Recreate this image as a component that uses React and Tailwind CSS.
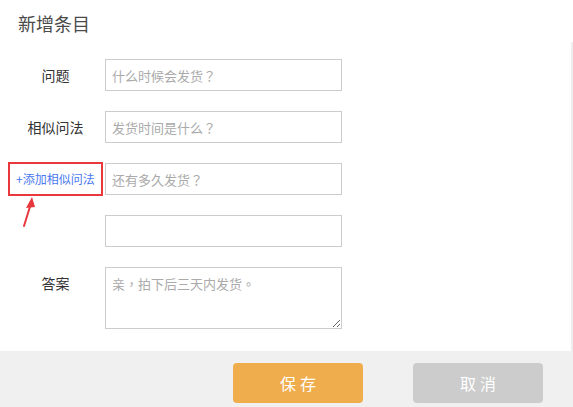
import React from 'react';

const font = { fontFamily: '"Microsoft YaHei", "Noto Sans CJK SC", "Noto Sans", sans-serif' };
const fieldFont = { fontFamily: '"Noto Sans CJK TC", "Noto Sans CJK SC", sans-serif' };

const inputCls =
  'w-[237px] h-[32px] border border-[#cccccc] bg-white px-[6px] text-[13px] text-[#333] placeholder:text-[#aaaaaa] outline-none';

const Row = ({ label, children }) => (
  <div className="flex items-center">
    <div className="w-[105px] pl-[6px] text-center text-[14px] text-[#333]">{label}</div>
    {children}
  </div>
);

export default function App() {
  return (
    <div className="relative w-[573px] h-[407px] bg-white flex flex-col overflow-hidden" style={font}>
      <div className="flex flex-1">
        <div className="flex-1">
          <h1 className="pl-[18px] pt-[11px] text-[18px] leading-[24px] text-[#4a4a4a] font-normal">新增条目</h1>

          <div className="mt-[24px] flex flex-col gap-[20px]">
            <Row label="问题">
              <input className={inputCls} style={fieldFont} placeholder="什么时候会发货？" />
            </Row>
            <Row label="相似问法">
              <input className={inputCls} style={fieldFont} placeholder="发货时间是什么？" />
            </Row>
            <div className="flex items-center h-[32px]">
              <div className="w-[105px] pl-[8px] pr-[2px]">
                <div className="h-[34px] border-2 border-[#e8383d] flex items-center pl-[6px] text-[12px] text-[#4a78f0] whitespace-nowrap">
                  +添加相似问法
                </div>
              </div>
              <input className={inputCls} style={fieldFont} placeholder="还有多久发货？" />
            </div>
            <Row label="">
              <input className={inputCls} style={fieldFont} />
            </Row>
            <div className="flex items-start">
              <div className="w-[105px] pl-[6px] h-[32px] leading-[32px] text-center text-[14px] text-[#333]">答案</div>
              <textarea
                className="w-[237px] h-[62px] border border-[#cccccc] bg-white px-[6px] py-[7px] text-[13px] leading-[18px] text-[#333] placeholder:text-[#aaaaaa] outline-none"
                style={fieldFont}
                placeholder="亲，拍下后三天内发货。"
              />
            </div>
          </div>
        </div>
        <div className="w-[2px] mt-[42px] bg-[#eeeeee]" />
      </div>

      <div className="h-[56px] bg-[#f0f0f0] flex gap-[50px] pl-[233px] pt-[12px]">
        <button className="w-[130px] h-[40px] rounded-[4px] bg-[#f0ad4e] text-white text-[16px] tracking-[4px] pl-[4px]">
          保存
        </button>
        <button className="w-[130px] h-[40px] rounded-[4px] bg-[#cccccc] text-white text-[16px] tracking-[4px] pl-[4px]">
          取消
        </button>
      </div>

      {/* red annotation arrow */}
      <svg className="absolute left-[18px] top-[195px]" width="22" height="34" viewBox="0 0 22 34">
        <polygon points="14,2 8,13 17,12" fill="#e8383d" />
        <line x1="12.5" y1="10" x2="6" y2="31" stroke="#e8383d" strokeWidth="2" strokeLinecap="round" />
      </svg>
    </div>
  );
}
